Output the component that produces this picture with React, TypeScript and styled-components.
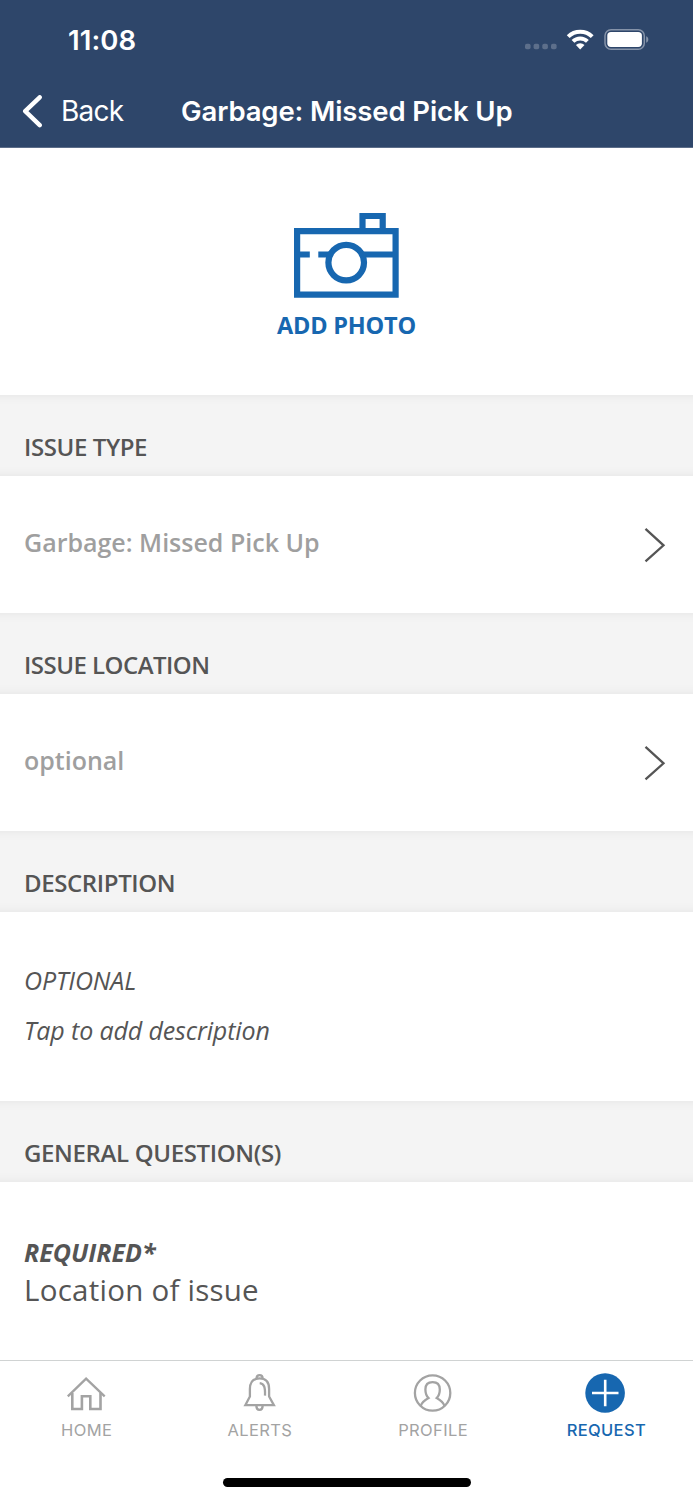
import React from 'react';
import styled, { createGlobalStyle } from 'styled-components';

const colors = {
  navy: '#2e466a',
  blue: '#1767b0',
  band: '#f4f4f4',
  ink: '#555555',
  muted: '#9f9f9f',
  tab: '#a3a3a3',
};

const GlobalStyle = createGlobalStyle`
  * { box-sizing: border-box; }
  body { margin: 0; background: #fff; font-family: "Open Sans", "Noto Sans", sans-serif; }
`;

const Screen = styled.div`
  display: flex;
  flex-direction: column;
  width: 693px;
  height: 1500px;
  overflow: hidden;
  background: #fff;
  white-space: nowrap;
`;

const Header = styled.header`
  flex: none;
  height: 148px;
  background: ${colors.navy};
  border-bottom: 1px solid #5c6d89;
  color: #fff;
  font-family: Inter, sans-serif;
`;

const StatusBar = styled.div`
  display: flex;
  align-items: center;
  justify-content: space-between;
  height: 80px;
  padding: 0 44px 0 68px;
`;

const Clock = styled.span`
  font-size: 27.5px;
  font-weight: 600;
  line-height: 34px;
  letter-spacing: 0.1px;
`;

const NavBar = styled.div`
  display: flex;
  align-items: center;
  height: 62px;
  padding-left: 22px;
`;

const BackLink = styled.span`
  width: 120px;
  margin-left: 18px;
  font-size: 28px;
  line-height: 36px;
  letter-spacing: -0.8px;
`;

const Title = styled.h1`
  margin: 0;
  font-size: 27.5px;
  font-weight: 600;
  line-height: 36px;
  letter-spacing: -0.12px;
`;

const PhotoPanel = styled.section`
  display: flex;
  flex: none;
  flex-direction: column;
  align-items: center;
  height: 247px;
  padding-top: 65px;
`;

const PhotoLabel = styled.span`
  margin-top: 11px;
  color: ${colors.blue};
  font-size: 23.5px;
  font-weight: 700;
  line-height: 32px;
  letter-spacing: -0.2px;
`;

const Band = styled.h2<{ $ls: number }>`
  flex: none;
  height: 81px;
  margin: 0;
  padding: 35px 24px 0;
  background: ${colors.band};
  box-shadow: inset 0 12px 10px -10px rgba(0, 0, 0, 0.05), inset 0 -12px 10px -10px rgba(0, 0, 0, 0.05);
  color: ${colors.ink};
  font-size: 24px;
  font-weight: 600;
  line-height: 34px;
  letter-spacing: ${(p) => p.$ls}px;
`;

const SelectRow = styled.div`
  display: flex;
  flex: none;
  align-items: center;
  justify-content: space-between;
  height: 137px;
  padding: 0 27px 0 24px;
  color: ${colors.muted};
  font-size: 25px;
  font-weight: 600;
`;

const RowValue = styled.span`
  margin-bottom: 6px;
  line-height: 36px;
`;

const DescriptionPanel = styled.div`
  display: flex;
  flex: none;
  flex-direction: column;
  height: 189px;
  padding: 43px 24px 0;
  color: ${colors.ink};
  font-size: 25px;
  font-style: italic;
  line-height: 50px;
`;

const Line = styled.span`
  letter-spacing: -0.13px;
`;

const QuestionPanel = styled.div`
  display: flex;
  flex: 1;
  flex-direction: column;
  padding: 51px 24px 0;
  color: ${colors.ink};
`;

const Required = styled.span`
  font-size: 25px;
  font-style: italic;
  font-weight: 700;
  line-height: 38px;
`;

const Question = styled.span`
  font-size: 29.5px;
  line-height: 37px;
  letter-spacing: 0.25px;
`;

const TabBar = styled.nav`
  display: grid;
  flex: none;
  grid-template-columns: repeat(4, 1fr);
  height: 118px;
  border-top: 1px solid #d0d3d3;
`;

const Tab = styled.div<{ $active?: boolean }>`
  display: flex;
  flex-direction: column;
  align-items: center;
  padding-top: 12px;
  color: ${(p) => (p.$active ? colors.blue : colors.tab)};
  font-family: Inter, sans-serif;
  font-size: 16.5px;
  font-weight: ${(p) => (p.$active ? 500 : 400)};
  line-height: 34px;
  letter-spacing: ${(p) => (p.$active ? 0.35 : 0.4)}px;
`;

const HomeArea = styled.div`
  display: flex;
  flex: none;
  justify-content: center;
  height: 22px;
`;

const HomeIndicator = styled.div`
  width: 248px;
  height: 9px;
  border-radius: 5px;
  background: #000;
`;

const StatusIcons = () => (
  <svg width="125" height="24" viewBox="524 28 125 24">
    <g fill="#5d6f8b">
      <rect x="525" y="43.7" width="5.6" height="5.6" rx="1.8" />
      <rect x="533.6" y="43.7" width="5.6" height="5.6" rx="1.8" />
      <rect x="542.3" y="43.7" width="5.6" height="5.6" rx="1.8" />
      <rect x="551" y="43.7" width="5.6" height="5.6" rx="1.8" />
    </g>
    <g fill="none" stroke="#fff" strokeWidth="4">
      <path d="M568.2 36.6a17.1 17.1 0 0 1 24 0" />
      <path d="M573 41.4a10.3 10.3 0 0 1 14.4 0" />
    </g>
    <path d="M580.2 49.4l-4.3-4.3a6.2 6.2 0 0 1 8.6 0z" fill="#fff" />
    <rect x="605" y="29.7" width="39.3" height="19.6" rx="6" fill="none" stroke="#8593a9" strokeWidth="1.5" />
    <rect x="607.3" y="32" width="34.6" height="15" rx="3.7" fill="#fff" />
    <path d="M646.2 36.3c2.8 1 2.8 5.5 0 6.5z" fill="#8593a9" />
  </svg>
);

const BackChevron = () => (
  <svg width="21" height="33" viewBox="22 94.5 21 33">
    <path d="M39.7 96.8L25.2 110.7l14.5 14" fill="none" stroke="#fff" strokeWidth="4.4" strokeLinecap="round" strokeLinejoin="round" />
  </svg>
);

const CameraIcon = () => (
  <svg width="105" height="85" viewBox="294 213 105 85" fill="none" stroke={colors.blue} strokeWidth="6.2">
    <path d="M297.1 231.1h98.5v63.6h-98.5zM362.5 231v-15h20.2v15M300 254.5h9.8M318.3 254.5h10.5M364 254.5h32" />
    <circle cx="346.2" cy="262.6" r="17.8" />
  </svg>
);

const RowChevron = () => (
  <svg width="22" height="36" viewBox="644 527 22 36">
    <path d="M645.5 528.8l18 16.5-18 16" fill="none" stroke={colors.ink} strokeWidth="2.3" />
  </svg>
);

const TabIcon = ({ children, x }: { children: React.ReactNode; x: number }) => (
  <svg width="42" height="40" viewBox={`${x} 1373 42 40`} fill="none" stroke="currentColor" strokeWidth="2.3">
    {children}
  </svg>
);

export default function App() {
  return (
    <>
      <GlobalStyle />
      <Screen>
        <Header>
          <StatusBar>
            <Clock>11:08</Clock>
            <StatusIcons />
          </StatusBar>
          <NavBar>
            <BackChevron />
            <BackLink>Back</BackLink>
            <Title>Garbage: Missed Pick Up</Title>
          </NavBar>
        </Header>
        <PhotoPanel>
          <CameraIcon />
          <PhotoLabel>ADD PHOTO</PhotoLabel>
        </PhotoPanel>
        <Band $ls={-0.4}>ISSUE TYPE</Band>
        <SelectRow>
          <RowValue>Garbage: Missed Pick Up</RowValue>
          <RowChevron />
        </SelectRow>
        <Band $ls={-0.52}>ISSUE LOCATION</Band>
        <SelectRow>
          <RowValue>optional</RowValue>
          <RowChevron />
        </SelectRow>
        <Band $ls={-0.38}>DESCRIPTION</Band>
        <DescriptionPanel>
          <Line>OPTIONAL</Line>
          <Line>Tap to add description</Line>
        </DescriptionPanel>
        <Band $ls={-0.35}>GENERAL QUESTION(S)</Band>
        <QuestionPanel>
          <Required>REQUIRED*</Required>
          <Question>Location of issue</Question>
        </QuestionPanel>
        <TabBar>
          <Tab>
            <TabIcon x={65.9}>
              <path d="M67.7 1396.3L86 1378.6l18.6 17.7" />
              <path d="M72.2 1393v16h9.6v-12.7h8.4v12.7h10.2v-16" strokeWidth="2.6" />
            </TabIcon>
            HOME
          </Tab>
          <Tab>
            <TabIcon x={239}>
              <path d="M245.3 1405.2l4.6-8.7v-7.5c0-6.8 3.6-10.6 9.6-10.6s9.6 3.8 9.6 10.6v7.5l4.8 8.7z" />
              <path d="M256.6 1378.2c.2-4 5.8-4 6 0M256.4 1406c0 5.2 6.2 5.2 6.2 0M259.7 1383.2c4.6.6 5.6 4 5.3 12.4" />
            </TabIcon>
            ALERTS
          </Tab>
          <Tab>
            <TabIcon x={412.1}>
              <circle cx="432.7" cy="1393" r="17.7" />
              <path d="M420.8 1406c1.4-4.4 4.4-6.2 7.8-8-2.2-2.2-3.1-4.4-3.1-8.5 0-4.7 2.5-7.3 7.2-7.3s7.2 2.6 7.2 7.3c0 4.1-.9 6.3-3.1 8.5 3.4 1.8 6.4 3.6 7.8 8" />
            </TabIcon>
            PROFILE
          </Tab>
          <Tab $active>
            <TabIcon x={585}>
              <circle cx="605.1" cy="1393" r="19.8" fill="currentColor" stroke="none" />
              <path d="M592 1393h26.5M605.2 1379.8v26.5" stroke="#fff" strokeWidth="2.6" />
            </TabIcon>
            REQUEST
          </Tab>
        </TabBar>
        <HomeArea>
          <HomeIndicator />
        </HomeArea>
      </Screen>
    </>
  );
}
